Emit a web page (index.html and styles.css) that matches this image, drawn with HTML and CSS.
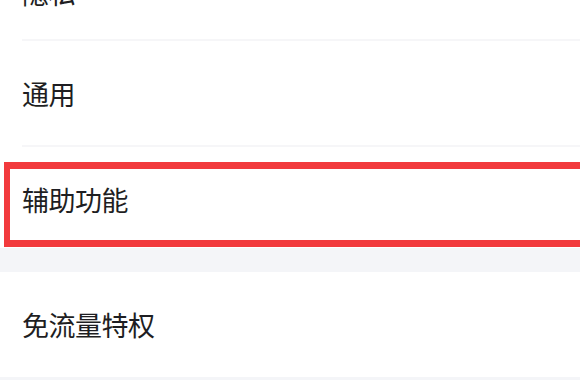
FILE: index.html
```html
<!DOCTYPE html>
<html lang="zh-CN">
<head>
<meta charset="utf-8">
<link rel="stylesheet" href="styles.css">
</head>
<body>
<div class="page">
  <div class="group">
    <div class="row row-first"><span class="label">隐私</span></div>
    <div class="row row-mid"><span class="label">通用</span></div>
    <div class="row row-hl"><span class="label">辅助功能</span><div class="highlight"></div></div>
  </div>
  <div class="gap"></div>
  <div class="group">
    <div class="row row-last"><span class="label">免流量特权</span></div>
  </div>
</div>
</body>
</html>
```

FILE: styles.css
```css
html, body {
  margin: 0;
  padding: 0;
  background: #f4f5f8;
  overflow: hidden;
}
.page {
  width: 580px;
  height: 380px;
  overflow: hidden;
  background: #f4f5f8;
  font-family: "Noto Sans CJK SC", "Noto Sans", sans-serif;
}
.group {
  background: #ffffff;
}
.row {
  position: relative;
  display: flex;
  align-items: center;
  margin-left: 22px;
  box-sizing: border-box;
}
.label {
  font-size: 27px;
  color: #1e1e22;
  letter-spacing: -0.5px;
  line-height: 1;
}
.row-first {
  height: 96px;
  margin-top: -55px;
  border-bottom: 2px solid #f6f6f8;
}
.row-mid {
  height: 106px;
  border-bottom: 2px solid #f6f6f8;
}
.row-hl {
  height: 101px;
  padding-top: 4px;
}
.row-last {
  height: 105px;
}
.gap {
  height: 24px;
}
.highlight {
  position: absolute;
  left: -18px;
  right: -40px;
  top: 15px;
  bottom: 1px;
  border: 7px solid #f23a3d;
  border-left-width: 6px;
}
```
